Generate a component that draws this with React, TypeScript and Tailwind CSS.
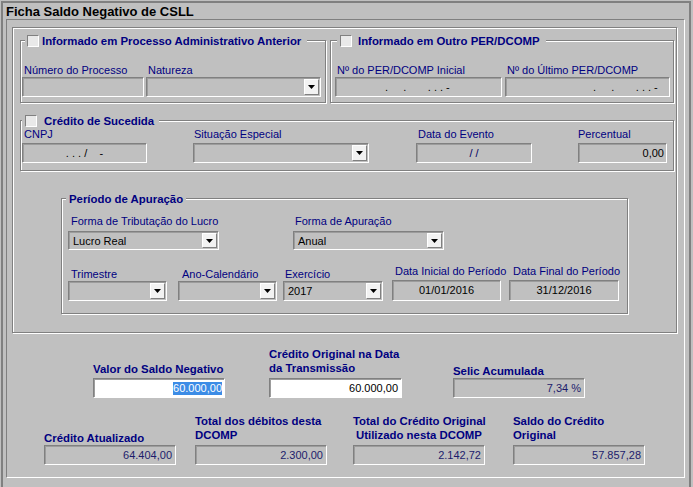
import React from "react";

const LABEL = "text-[11px] leading-[13px] text-[#000080] whitespace-nowrap";
const BOLD = "text-[11.4px] leading-[14px] font-bold text-[#000080] whitespace-nowrap";

function Box({
  className = "",
  white = false,
  children,
}: {
  className?: string;
  white?: boolean;
  children?: React.ReactNode;
}) {
  return (
    <div
      className={`flex items-center border border-t-[#808080] border-l-[#808080] border-r-white border-b-white shadow-[inset_1px_1px_0_#9c9c9c] text-[11px] leading-[13px] whitespace-pre ${
        white ? "bg-white" : "bg-[#c0c0c0]"
      } ${className}`}
    >
      {children}
    </div>
  );
}

function DropBtn() {
  return (
    <div className="mr-px my-px self-stretch w-[15px] flex items-center justify-center bg-[#f2f2f2] border border-t-white border-l-white border-r-[#808080] border-b-[#808080]">
      <svg width="7" height="4" viewBox="0 0 7 4">
        <path d="M0 0H7L3.5 4Z" fill="#000" />
      </svg>
    </div>
  );
}

function Select({ className = "", value = "" }: { className?: string; value?: string }) {
  return (
    <Box className={className}>
      <span className="flex-1 pl-[4px] pt-px text-black">{value}</span>
      <DropBtn />
    </Box>
  );
}

function Check() {
  return (
    <div className="w-[12px] h-[12px] shrink-0 bg-[#e9e9e9] border border-t-[#808080] border-l-[#808080] border-r-white border-b-white" />
  );
}

function Group({
  className = "",
  legend,
  children,
}: {
  className?: string;
  legend: React.ReactNode;
  children?: React.ReactNode;
}) {
  return (
    <div
      className={`relative border border-[#808080] shadow-[1px_1px_0_#fff,inset_1px_1px_0_#fff] ${className}`}
    >
      {legend}
      {children}
    </div>
  );
}

export default function App() {
  return (
    <div className="w-[693px] h-[487px] bg-[#c0c0c0] pl-px pt-px overflow-hidden font-['Liberation_Sans',Arial,sans-serif]">
      <div className="w-[690px] h-[486px] border-t-2 border-l-2 border-r-2 border-[#808080]">
        <div className="pl-[3px] pt-[2px] h-[16px] text-[13px] leading-[14px] font-bold text-black whitespace-nowrap">
          Ficha Saldo Negativo de CSLL
        </div>

        <div className="ml-[3px] w-[679px] h-[459px] border border-t-[#808080] border-l-[#808080] border-r-white border-b-white">
          {/* upper etched area */}
          <div className="ml-[5px] mt-[7px] w-[665px] h-[306px] border border-[#808080] shadow-[1px_1px_0_#fff,inset_1px_1px_0_#fff]">
            <div className="flex ml-[7px] mt-[12px]">
              <Group
                className="w-[306px] h-[63px]"
                legend={
                  <div className="absolute top-[-7px] left-[4px] h-[13px] flex items-center gap-[3px] bg-[#c0c0c0] pl-[2px] pr-[6px]">
                    <Check />
                    <span className={BOLD}>Informado em Processo Administrativo Anterior</span>
                  </div>
                }
              >
                <div className="flex mt-[23px]">
                  <div className="ml-px w-[122px]">
                    <div className={`${LABEL} pl-[2px]`}>Número do Processo</div>
                    <Box className="h-[20px]" />
                  </div>
                  <div className="ml-[2px] w-[175px]">
                    <div className={`${LABEL} pl-[2px]`}>Natureza</div>
                    <Select className="h-[20px]" />
                  </div>
                </div>
              </Group>

              <Group
                className="ml-[4px] w-[344px] h-[63px]"
                legend={
                  <div className="absolute top-[-7px] left-[6px] h-[13px] flex items-center gap-[6px] bg-[#c0c0c0] pl-[3px] pr-[6px]">
                    <Check />
                    <span className={BOLD}>Informado em Outro PER/DCOMP</span>
                  </div>
                }
              >
                <div className="flex mt-[23px]">
                  <div className="ml-[4px] w-[167px]">
                    <div className={`${LABEL} pl-[2px]`}>Nº do PER/DCOMP Inicial</div>
                    <Box className="h-[20px] pl-[49px] text-black">{".     .       . . . -"}</Box>
                  </div>
                  <div className="ml-[3px] w-[165px]">
                    <div className={`${LABEL} pl-[2px]`}>Nº do Último PER/DCOMP</div>
                    <Box className="h-[20px] pl-[87px] text-black">{".     .       . . . -"}</Box>
                  </div>
                </div>
              </Group>
            </div>

            <Group
              className="ml-[7px] mt-[17px] w-[654px] h-[51px]"
              legend={
                <div className="absolute top-[-7px] left-px h-[13px] flex items-center gap-[7px] bg-[#c0c0c0] pl-[3px] pr-[5px]">
                  <Check />
                  <span className={BOLD}>Crédito de Sucedida</span>
                </div>
              }
            >
              <div className="flex mt-[7px]">
                <div className="ml-px w-[125px]">
                  <div className={`${LABEL} pl-[2px]`}>CNPJ</div>
                  <Box className="mt-[2px] h-[20px] justify-center text-black">{". . . /    -"}</Box>
                </div>
                <div className="ml-[46px] w-[176px]">
                  <div className={`${LABEL} pl-px`}>Situação Especial</div>
                  <Select className="mt-[2px] h-[20px]" />
                </div>
                <div className="ml-[47px] w-[116px]">
                  <div className={`${LABEL} pl-[2px]`}>Data do Evento</div>
                  <Box className="mt-[2px] h-[20px] justify-center text-[#000060]">{"/ /"}</Box>
                </div>
                <div className="ml-[46px] w-[89px]">
                  <div className={LABEL}>Percentual</div>
                  <Box className="mt-[2px] h-[20px] justify-end pr-[2px] text-black">0,00</Box>
                </div>
              </div>
            </Group>

            <Group
              className="ml-[48px] mt-[27px] w-[567px] h-[116px]"
              legend={
                <div className="absolute top-[-7px] left-[4px] h-[13px] flex items-center bg-[#c0c0c0] pl-[3px] pr-[3px]">
                  <span className={BOLD}>Período de Apuração</span>
                </div>
              }
            >
              <div className="flex mt-[16px]">
                <div className="ml-[6px] w-[151px]">
                  <div className={`${LABEL} pl-[3px]`}>Forma de Tributação do Lucro</div>
                  <Select className="mt-[3px] h-[19px]" value="Lucro Real" />
                </div>
                <div className="ml-[74px] w-[151px]">
                  <div className={`${LABEL} pl-[2px]`}>Forma de Apuração</div>
                  <Select className="mt-[3px] h-[19px]" value="Anual" />
                </div>
              </div>
              <div className="flex items-end mt-[15px]">
                <div className="ml-[6px] w-[99px]">
                  <div className={`${LABEL} pl-[3px]`}>Trimestre</div>
                  <Select className="h-[20px]" />
                </div>
                <div className="ml-[11px] w-[99px]">
                  <div className={`${LABEL} pl-[4px]`}>Ano-Calendário</div>
                  <Select className="h-[20px]" />
                </div>
                <div className="ml-[6px] w-[100px]">
                  <div className={`${LABEL} pl-[2px]`}>Exercício</div>
                  <Select className="h-[20px]" value="2017" />
                </div>
                <div className="ml-[9px] w-[109px]">
                  <div className={`${LABEL} pl-[3px]`}>Data Inicial do Período</div>
                  <Box className="mt-[2px] h-[21px] justify-center text-black">01/01/2016</Box>
                </div>
                <div className="ml-[8px] w-[110px]">
                  <div className={`${LABEL} pl-[4px]`}>Data Final do Período</div>
                  <Box className="mt-[2px] h-[21px] justify-center text-black">31/12/2016</Box>
                </div>
              </div>
            </Group>
          </div>

          {/* values */}
          <div className="flex items-end mt-[14px]">
            <div className="ml-[86px] w-[132px]">
              <div className={BOLD}>Valor do Saldo Negativo</div>
              <Box white className="mt-[2px] h-[20px] justify-end pr-[2px]">
                <span className="bg-[#3c8ce6] text-white">60.000,00</span>
              </Box>
            </div>
            <div className="ml-[44px] w-[133px]">
              <div className={BOLD}>
                Crédito Original na Data
                <br />
                da Transmissão
              </div>
              <Box white className="mt-[3px] h-[20px] justify-end pr-[3px] text-black">60.000,00</Box>
            </div>
            <div className="ml-[51px] w-[132px]">
              <div className={BOLD}>Selic Acumulada</div>
              <Box className="h-[20px] justify-end pr-[3px] text-[#1c1c6c]">7,34 %</Box>
            </div>
          </div>

          <div className="flex items-end mt-[16px]">
            <div className="ml-[37px] w-[132px]">
              <div className={BOLD}>Crédito Atualizado</div>
              <Box className="h-[20px] justify-end pr-[3px] text-[#1c1c6c]">64.404,00</Box>
            </div>
            <div className="ml-[19px] w-[132px]">
              <div className={BOLD}>
                Total dos débitos desta
                <br />
                DCOMP
              </div>
              <Box className="mt-[3px] h-[20px] justify-end pr-[3px] text-[#1c1c6c]">2.300,00</Box>
            </div>
            <div className="ml-[26px] w-[132px]">
              <div className={BOLD}>
                Total do Crédito Original
                <div className="pl-[3px]">Utilizado nesta DCOMP</div>
              </div>
              <Box className="mt-[3px] h-[20px] justify-end pr-[3px] text-[#1c1c6c]">2.142,72</Box>
            </div>
            <div className="ml-[28px] w-[132px]">
              <div className={BOLD}>
                Saldo do Crédito
                <br />
                Original
              </div>
              <Box className="mt-[3px] h-[20px] justify-end pr-[3px] text-[#1c1c6c]">57.857,28</Box>
            </div>
          </div>
        </div>
      </div>
    </div>
  );
}
